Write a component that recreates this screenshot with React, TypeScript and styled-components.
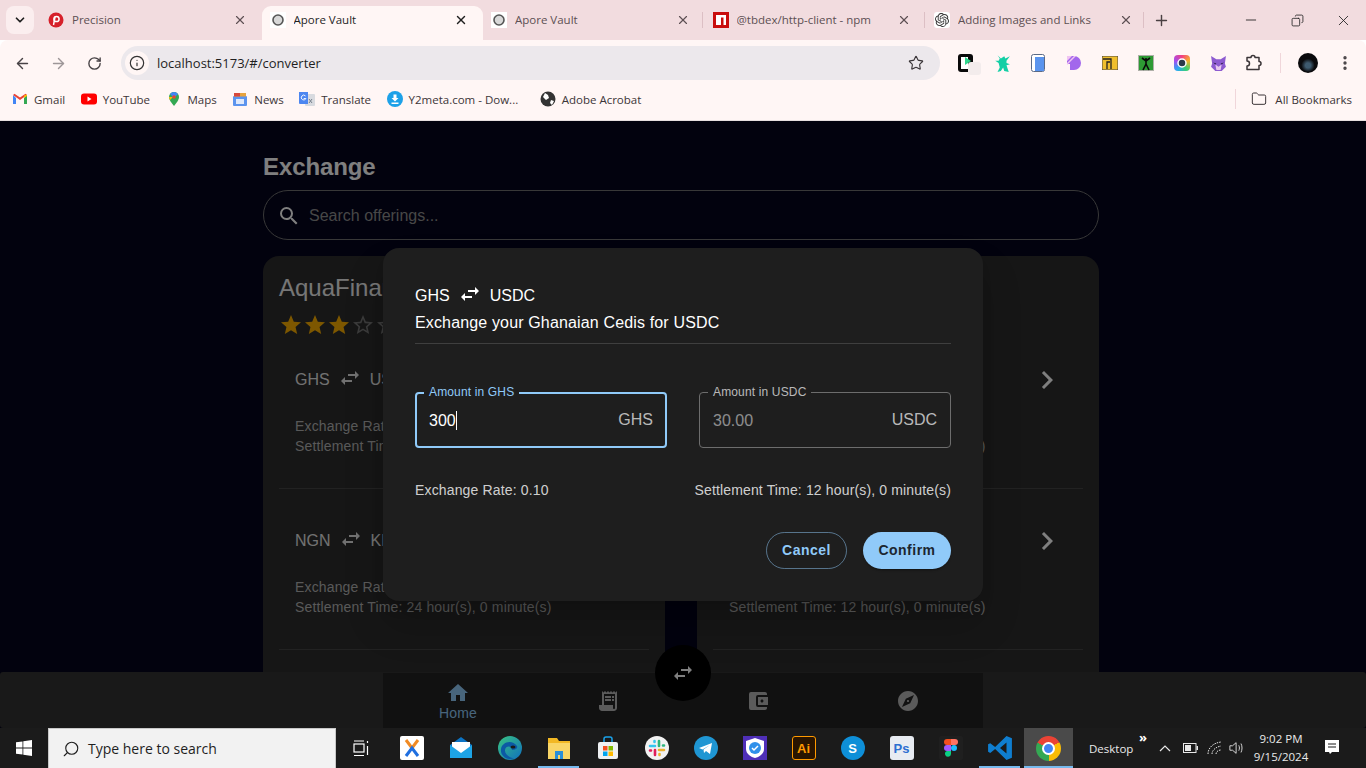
import React from "react";
import styled, { createGlobalStyle } from "styled-components";
import { ArrowLeft, ArrowRight, RotateCw, Star, Info, Minus, X, Plus, Folder, EllipsisVertical, ChevronDown, Search, Copy } from "lucide-react";
import { MdHome, MdReceiptLong, MdAccountBalanceWallet, MdExplore, MdSwapHoriz, MdStar, MdStarBorder, MdSearch, MdChevronRight } from "react-icons/md";
import { SiOpenai } from "react-icons/si";

const Global = createGlobalStyle`
  html, body { margin: 0; padding: 0; height: 100%; overflow: hidden; }
  #root { height: 100%; }
  * { box-sizing: border-box; }
`;

const Screen = styled.div`
  width: 1366px; height: 768px; display: flex; flex-direction: column; overflow: hidden;
  font-family: "Open Sans", "Liberation Sans", sans-serif;
`;

/* ---------- browser chrome ---------- */
const TabStrip = styled.div`
  height: 40px; background: #f2dcdf; display: flex; align-items: flex-start; padding: 6px 0 0 6px;
`;
const TabMenu = styled.div`
  width: 28px; height: 28px; border-radius: 8px; background: #fbeeef; color: #1f1f1f;
  display: flex; align-items: center; justify-content: center; margin-right: 6px;
`;
const Tab = styled.div<{ $active?: boolean; $sep?: boolean }>`
  width: 221.5px; height: 34px; display: flex; align-items: center; padding: 0 15px 6px 8px; gap: 8px; position: relative;
  border-radius: 9px 9px 0 0; font-size: 11.5px; line-height: 16px;
  background: ${(p) => (p.$active ? "#fff6f5" : "transparent")};
  color: ${(p) => (p.$active ? "#1f1f1f" : "#5d5053")};
  &::before {
    content: ""; display: ${(p) => (p.$sep ? "block" : "none")}; position: absolute; left: -2.5px; top: 6px; width: 1px; height: 16px; background: #dcbfc4;
  }
`;
const TabTitle = styled.span`
  flex: 1; white-space: nowrap; overflow: hidden;
`;
const NewTab = styled.div`
  margin-left: -3.5px; width: 34px; height: 28px; display: flex; align-items: center; justify-content: center; color: #4a4042;
  &::before { content: ""; width: 1px; height: 16px; background: #dcbfc4; margin-left: -9px; margin-right: 9px; }
`;
const WindowControls = styled.div`
  margin-left: auto; display: flex; color: #1f1f1f; height: 28px; align-items: center;
`;
const WindowButton = styled.div`
  width: 46px; display: flex; justify-content: center;
`;
const Toolbar = styled.div`
  height: 46px; background: #fff6f5; display: flex; align-items: center; padding-left: 4px; border-radius: 8px 8px 0 0;
`;
const NavButton = styled.div<{ $dim?: boolean }>`
  width: 36px; display: flex; justify-content: center; color: ${(p) => (p.$dim ? "#9d9698" : "#474245")};
`;
const Omnibox = styled.div`
  width: 819px; height: 34px; margin-left: 9px; border-radius: 17px; background: #ece8ec;
  display: flex; align-items: center; padding: 0 16px 0 4px; font-size: 13px; color: #1f1f1f;
`;
const InfoBadge = styled.div`
  width: 24px; height: 24px; border-radius: 50%; background: #fff6f5; display: flex; align-items: center; justify-content: center; margin-right: 8px;
`;
const Url = styled.span` flex: 1; `;
const ExtRow = styled.div` display: flex; margin-left: 8px; `;
const ExtSlot = styled.div`
  width: 36px; height: 20px; display: flex; align-items: center; justify-content: center; color: #3b3538; position: relative;
`;
const ExtSep = styled.div` width: 1px; height: 20px; background: #f0d6da; margin-left: 8px; `;
const Avatar = styled.div`
  width: 20px; height: 20px; border-radius: 50%; margin-left: 17px;
  background: radial-gradient(circle at 50% 62%, #3e5a6e 0 16%, #0a0a0c 42%);
`;
const Dots = styled.div` margin-left: 18px; color: #474245; display: flex; `;
const BookmarkBar = styled.div`
  height: 35px; background: #fff6f5; display: flex; align-items: center; padding: 0 14px 8px 12px; gap: 15.5px;
  font-size: 11.5px; color: #3c3538; border-bottom: 1px solid #e6dfdf;
`;
const Bookmark = styled.div<{ $gap?: number; $shift?: number }>`
  display: flex; align-items: center; gap: ${(p) => p.$gap ?? 6}px; white-space: nowrap; margin-left: ${(p) => p.$shift ?? 0}px;
`;
const BookmarkSep = styled.div` width: 1px; height: 20px; background: #f0d6da; margin-left: auto; `;

/* ---------- app ---------- */
const Viewport = styled.div`
  flex: 1; position: relative; overflow: hidden; background: #04041c;
  font-family: "Liberation Sans", Arial, sans-serif; color: #fff; letter-spacing: 0.15px;
`;
const Content = styled.div` width: 836px; margin-left: 263px; padding-top: 30px; `;
const Heading = styled.h1`
  margin: 0 0 7px; font-size: 24px; line-height: 32px; font-weight: 700; color: #fff; letter-spacing: -0.1px;
`;
const SearchBar = styled.div`
  height: 50px; border: 1px solid #707070; border-radius: 25px; display: flex; align-items: center; padding: 1px 13px 0;
  gap: 8px; font-size: 16px; color: #8f8f8f; margin-bottom: 16px; letter-spacing: 0;
  svg { color: #fff; }
`;
const Cards = styled.div` display: grid; grid-template-columns: 402px 402px; gap: 32px; `;
const Card = styled.section`
  background: #2c2c2c; border-radius: 16px 16px 0 0; padding: 16px 16px 0; height: 480px;
`;
const Provider = styled.div` font-size: 24px; line-height: 32px; color: #ededed; letter-spacing: 0; `;
const Stars = styled.div` display: flex; height: 24px; margin-top: 9px; color: #faaf00; `;
const Row = styled.div`
  display: flex; justify-content: space-between; align-items: flex-start; padding: 40px 0 32px 16px;
  border-bottom: 1px solid #444;
  ${Stars} + & { padding-top: 31px; }
`;
const Pair = styled.div`
  display: flex; align-items: center; gap: 8px; font-size: 16px; line-height: 22px; height: 22px; letter-spacing: 0;
  svg { margin-top: -5px; }
`;
const RowPair = styled(Pair)` color: #e3e3e3; margin-top: 1px; `;
const RowInfo = styled.div`
  margin-top: 25px; font-size: 14px; line-height: 20px; color: #b3b3b3;
`;
const Chevron = styled.div` margin: -6px 18px 0 0; height: 36px; color: #fff; `;

const BottomStrip = styled.div`
  position: absolute; left: 0; right: 0; bottom: 0; height: 56px; background: #323232; border-radius: 3px; display: flex; justify-content: center;
`;
const BottomNav = styled.nav`
  width: 600px; margin-top: 1px; display: grid; grid-template-columns: repeat(4, 1fr); background: #222;
`;
const NavItem = styled.div<{ $active?: boolean }>`
  display: flex; flex-direction: column; align-items: center; justify-content: center; font-size: 14px; line-height: 16px; padding-top: 1px;
  color: ${(p) => (p.$active ? "#90caf9" : "#b6b6b6")};
`;
const SwapFab = styled.div`
  position: absolute; left: 655px; top: 524px; width: 56px; height: 56px; border-radius: 50%; background: #000;
  display: flex; align-items: center; justify-content: center; color: #fff;
`;

const Backdrop = styled.div`
  position: absolute; inset: 0; background: rgba(0, 0, 0, 0.5); display: flex; align-items: center; justify-content: center;
`;
const Dialog = styled.div`
  width: 600px; background: #1e1e1e; border-radius: 16px; padding: 37px 32px 32px; color: #fff;
  box-shadow: 0 11px 15px -7px rgba(0,0,0,.2), 0 24px 38px 3px rgba(0,0,0,.14);
`;
const Sub = styled.div`
  margin-top: 4px; font-size: 16px; line-height: 24px; padding-bottom: 8px; border-bottom: 1px solid #3f3f3f;
`;
const Fields = styled.div` display: grid; grid-template-columns: 252px 252px; gap: 32px; margin-top: 48px; `;
const Field = styled.div<{ $focused?: boolean }>`
  position: relative; height: 56px; border-radius: 4px; display: flex; align-items: center; justify-content: space-between;
  border: ${(p) => (p.$focused ? "2px solid #90caf9" : "1px solid #6d6d6d")};
  font-size: 16px; padding: 0 ${(p) => (p.$focused ? 12 : 13)}px;
  letter-spacing: 0;
`;
const FieldLabel = styled.label<{ $focused?: boolean }>`
  position: absolute; left: ${(p) => (p.$focused ? 7 : 8)}px; top: ${(p) => (p.$focused ? -9 : -8)}px; padding: 0 5px; background: #1e1e1e; font-size: 12px; line-height: 14px; letter-spacing: 0.15px;
  color: ${(p) => (p.$focused ? "#90caf9" : "rgba(255,255,255,.7)")};
`;
const Value = styled.span<{ $muted?: boolean }>`
  color: ${(p) => (p.$muted ? "rgba(255,255,255,.5)" : "#fff")}; display: inline-flex; align-items: center; margin-top: 1px;
`;
const Caret = styled.i` width: 1px; height: 19px; background: #fff; display: block; `;
const Suffix = styled.span` color: rgba(255,255,255,.7); `;
const InfoRow = styled.div`
  display: flex; justify-content: space-between; margin-top: 32px; font-size: 14px; line-height: 20px; color: rgba(255,255,255,.8);
`;
const Actions = styled.div` display: flex; justify-content: flex-end; gap: 16px; margin-top: 32px; `;
const PillButton = styled.button<{ $primary?: boolean }>`
  height: 37px; border-radius: 19px; padding: 0 0 2px; font: 700 14px/1 "Liberation Sans", Arial, sans-serif; letter-spacing: 0.5px;
  width: ${(p) => (p.$primary ? 88 : 81)}px;
  color: ${(p) => (p.$primary ? "#1c2630" : "#90caf9")};
  background: ${(p) => (p.$primary ? "#90caf9" : "transparent")};
  border: ${(p) => (p.$primary ? "none" : "1px solid rgba(144,202,249,.5)")};
  box-shadow: ${(p) => (p.$primary ? "0 3px 1px -2px rgba(0,0,0,.2), 0 2px 2px rgba(0,0,0,.14)" : "none")};
`;

/* ---------- taskbar ---------- */
const Taskbar = styled.div`
  height: 40px; background: #1b1b1b; display: flex; align-items: stretch; color: #fff; position: relative;
`;
const StartButton = styled.div` width: 48px; display: flex; align-items: center; justify-content: center; `;
const SearchBox = styled.div`
  width: 288px; background: #f2f2f2; color: #1f1f1f; display: flex; align-items: center; gap: 8px; padding-left: 13px;
  font-size: 14px; border: 1px solid #c8c8c8; border-bottom: none;
`;
const TaskView = styled.div` width: 51px; display: flex; align-items: center; justify-content: center; `;
const TaskSlot = styled.div<{ $active?: boolean; $open?: boolean }>`
  width: 49px; display: flex; align-items: center; justify-content: center; position: relative;
  background: ${(p) => (p.$active ? "#4a4a4a" : "transparent")};
  &::after {
    content: ""; position: absolute; bottom: 0; height: 2px; background: #76b9ed;
    left: ${(p) => (p.$active ? 0 : 4)}px; right: ${(p) => (p.$active ? 0 : 4)}px;
    display: ${(p) => (p.$active || p.$open ? "block" : "none")};
  }
`;
const AppTile = styled.span<{ $bg: string; $fg: string; $bd?: string; $round?: boolean }>`
  width: 24px; height: 24px; display: flex; align-items: center; justify-content: center;
  border-radius: ${(p) => (p.$round ? "50%" : "3px")}; background: ${(p) => p.$bg}; color: ${(p) => p.$fg};
  border: ${(p) => (p.$bd ? `1px solid ${p.$bd}` : "none")};
  font: 700 13px/1 "Liberation Sans", Arial, sans-serif;
`;
const ChromeLogo = styled.span`
  width: 25px; height: 25px; border-radius: 50%; display: flex; align-items: center; justify-content: center;
  background: conic-gradient(from -62deg, #ea4335 0 122deg, #fbbc05 122deg 240deg, #34a853 240deg 360deg);
  &::after { content: ""; width: 9px; height: 9px; border-radius: 50%; background: #4285f4; border: 2px solid #fff; box-sizing: content-box; }
`;
const Tray = styled.div` flex: 1; display: flex; align-items: center; font-size: 11.5px; color: #eaeaea; padding-left: 16px; `;
const DesktopLabel = styled.span` width: 50px; `;
const Chevrons = styled.span` font-size: 13px; font-weight: 700; margin-top: -22px; width: 12px; color: #fff; line-height: 14px; `;
const TrayIcon = styled.span<{ $w: number }>` width: ${(p) => p.$w}px; display: flex; justify-content: center; `;
const Clock = styled.div` width: 72px; text-align: center; font-size: 11.5px; line-height: 18px; white-space: nowrap; margin-top: -1px; `;
const Notify = styled.span` margin-left: 6px; display: flex; `;

/* ---------- drawings ---------- */
const Fav = ({ children, s = 16 }: { children: React.ReactNode; s?: number }) => (
  <svg width={s} height={s} viewBox="0 0 16 16" style={{ flex: "none" }}>{children}</svg>
);
const Precision = () => <Fav><circle cx="8" cy="8" r="7.5" fill="#d6202a" /><circle cx="8.5" cy="7" r="2.6" fill="none" stroke="#fff" strokeWidth="1.5" /><path d="M7 5l-1.5 8" stroke="#fff" strokeWidth="1.4" /></Fav>;
const Vault = () => <Fav><rect width="16" height="16" fill="#fff" /><circle cx="8" cy="8" r="5" fill="#d8d8d8" stroke="#555" strokeWidth="1.6" /></Fav>;
const Npm = () => <Fav><rect width="16" height="16" fill="#c90d0d" /><path d="M3 3h10v10h-2.5V5.5H8V13H3z" fill="#fff" /></Fav>;
const OpenAi = () => <span style={{ width: 16, height: 16, background: "#fff", borderRadius: 3, display: "flex", alignItems: "center", justifyContent: "center", color: "#333" }}><SiOpenai size={14} /></span>;
const Gmail = () => <Fav><path d="M1 4v9h3V7z" fill="#4285f4" /><path d="M15 4v9h-3V7z" fill="#34a853" /><path d="M1 4l7 5 7-5-1.5-1.3L8 6.5 2.5 2.7z" fill="#ea4335" /><path d="M12 4.5V7l3-2V3.5z" fill="#fbbc05" /></Fav>;
const YouTube = () => <Fav><rect y="2.5" width="16" height="11" rx="3" fill="#f00" /><path d="M6.5 5.5l4 2.5-4 2.5z" fill="#fff" /></Fav>;
const Maps = () => <Fav><path d="M8 1a5 5 0 0 0-5 5c0 3.5 5 9 5 9s5-5.500 5-9a5 5 0 0 0-5-5z" fill="#34a853" /><path d="M4 3l4 4 4-4a5 5 0 0 0-8 0z" fill="#4285f4" /><path d="M3 6c0 1 .5 2 1 3l3-3z" fill="#fbbc05" /><circle cx="8" cy="6" r="1.8" fill="#ea4335" /></Fav>;
const News = () => <Fav><rect x="1" y="5" width="14" height="10" rx="1" fill="#5c94ee" /><path d="M2 2h12v3.500H2z" fill="#e8a33d" /><path d="M2 2h6v3.500H2z" fill="#d8483b" /><rect x="4" y="8" width="8" height="5" fill="#dfe9fb" /></Fav>;
const Translate = () => <Fav><rect x="6" y="3" width="10" height="12" rx="1" fill="#d8dadf" /><path d="M0 1h9v12H1a1 1 0 0 1-1-1z" fill="#4c86f0" /><path d="M6.500 5a2.400 2.400 0 1 0 .4 2.500H4.700" fill="none" stroke="#fff" strokeWidth=".9" /><path d="M10 8l3 4M13 8l-3 4" stroke="#77808c" /></Fav>;
const Y2 = () => <Fav><circle cx="8" cy="8" r="8" fill="#1da1e8" /><path d="M6.500 3.500h3V7h2L8 10.500 4.500 7h2zM4.500 11.500h7V13h-7z" fill="#fff" /></Fav>;
const Globe = () => <Fav><circle cx="8" cy="8" r="7.500" fill="#333" /><path d="M5 2l3 2 1 3-3 2-3-3zM11 9l3 1-2 4-2-2z" fill="#fff" /></Fav>;
const Ext1 = () => <svg width="18" height="20" viewBox="0 0 18 20"><rect x="1" y="1" width="15" height="18" rx="3" fill="#0a0a0a" /><rect x="4" y="4" width="7" height="12" fill="#fff" /><path d="M8 4l6 4-6 4z" fill="#2fd58c" /></svg>;
const ExtPatch = styled.i` position: absolute; left: 20px; top: 9px; width: 13px; height: 13px; border-radius: 3px; background: #f3ecec; `;
const Ext2 = () => <Fav s={18}><path d="M4 1l3 3 3-2 1 2 4-2-3 4 0 2 3 1-3 1 1 3 1 3-4-1-1-3-2 3-3 1 2-4-1-4-3-2 3 0 1-2z" fill="#13cfa5" /></Fav>;
const Ext3 = () => <svg width="14" height="18" viewBox="0 0 14 18"><rect x=".5" y=".5" width="13" height="17" rx="2" fill="#fff" stroke="#5b6a86" /><rect x="4" y="3" width="9" height="14" fill="#5a94ee" /></svg>;
const Ext4 = () => <Fav s={16}><path d="M1 1h7a7 7 0 0 1 0 14H4v-6H1z" fill="#a267ec" /><path d="M1 1h5L1 6zM1 8l7-7h2L1 10z" fill="#f1c4f2" /></Fav>;
const Ext5 = () => <svg width="16" height="14" viewBox="0 0 16 14"><rect width="16" height="14" fill="#f0bf2c" stroke="#444" /><path d="M1 3h8v10M5 13V6h3" fill="none" stroke="#222" strokeWidth="1.300" /></svg>;
const Ext6 = () => <Fav><rect width="16" height="16" fill="#aeb0a8" /><rect x="1" y="1" width="14" height="14" fill="#2e9a34" /><path d="M8 3v6l-3 6M8 9l3 6M4 3l4 3 4-3" stroke="#0a0a0a" strokeWidth="1.600" fill="none" /></Fav>;
const Ext7 = () => <span style={{ width: 16, height: 16, borderRadius: 4, background: "conic-gradient(#f43f7f,#f7b32b,#3ad06f,#2aa9f2,#a24df0,#f43f7f)", display: "flex", alignItems: "center", justifyContent: "center" }}><svg width="10" height="10"><circle cx="5" cy="5" r="4" fill="#2c3a4a" stroke="#fff" strokeWidth="1.500" /></svg></span>;
const Fox = () => <Fav s={17}><path d="M1 1l5 3h4l5-3-1 7 1 3-4 4H5l-4-4 1-3z" fill="#8d5bd0" /><path d="M5 9l3 2 3-2-1 5H6z" fill="#e8c8ee" /><path d="M3 7l3 1-1 1zM13 7l-3 1 1 1z" fill="#2c1c46" /></Fav>;
const PuzzleIcon = () => <svg width="18" height="18" viewBox="0 0 18 18" fill="none" stroke="#3b3538" strokeWidth="1.500" strokeLinejoin="round"><path d="M2 3.500h4a2 2 0 0 1 4 0h4v4a2 2 0 0 1 0 4v4H2v-3.500a1.800 1.800 0 0 0 0-5z" /></svg>;

const WinLogo = () => <svg width="16" height="16" viewBox="0 0 16 16" fill="#fff"><path d="M0 2.300l6.500-.9v6.200H0zM7.300 1.300L16 0v7.600H7.300zM0 8.400h6.500v6.200L0 13.700zM7.300 8.400H16V16l-8.700-1.200z" /></svg>;
const TaskViewIcon = () => <svg width="17" height="17" viewBox="0 0 17 17" fill="none" stroke="#fff" strokeWidth="1.200"><rect x="1" y="4" width="10" height="8" /><path d="M1 1h10M1 15.500h10M14.500 1v2M14.500 6v9" /></svg>;
const S = ({ children, s = 24 }: { children: React.ReactNode; s?: number }) => <svg width={s} height={s} viewBox="0 0 24 24">{children}</svg>;
const ClickApp = () => <S><rect width="24" height="24" rx="2" fill="#fff" /><path d="M6 4l6 8 6-8" fill="none" stroke="#f08a24" strokeWidth="3" /><path d="M6 20l6-8 6 8" fill="none" stroke="#1f6fe0" strokeWidth="3" /></S>;
const MailApp = () => <S><path d="M12 1l11 8v13H1V9z" fill="#0c74c4" /><path d="M3 6h18v8l-9 5-9-5z" fill="#fff" /><path d="M1 9l11 8 11-8v13H1z" fill="#1da4e6" /></S>;
const EdgeApp = () => <S><defs><linearGradient id="edg" x1="0" y1="0" x2="1" y2="1"><stop offset="0" stopColor="#39c481" /><stop offset="1" stopColor="#0f6fc0" /></linearGradient></defs><circle cx="12" cy="12" r="12" fill="url(#edg)" /><path d="M3 13C4 6 14 3 19 10c1 2-1 4-5 4 0-4-6-5-7 0-.5 4 4 8 9 8-7 3-14-2-13-9z" fill="#0c59a4" /><ellipse cx="15" cy="11" rx="2.500" ry="1.500" fill="#1b1b1b" /></S>;
const FolderApp = () => <S><path d="M1 2h9l2 3h11v18H1z" fill="#f2b824" /><rect x="1" y="7" width="22" height="16" fill="#f9d667" /><path d="M8 15h8v8h-3v-4h-2v4H8z" fill="#2a8fd8" /></S>;
const StoreApp = () => <S><path d="M8 6V3a2 2 0 0 1 2-2h4a2 2 0 0 1 2 2v3" fill="none" stroke="#1aa2ea" strokeWidth="1.500" /><rect x="2" y="6" width="20" height="17" rx="2" fill="#eef0f2" /><rect x="7" y="10" width="4.500" height="4.500" fill="#f25022" /><rect x="12.500" y="10" width="4.500" height="4.500" fill="#7fba00" /><rect x="7" y="15.500" width="4.500" height="4.500" fill="#00a4ef" /><rect x="12.500" y="15.500" width="4.500" height="4.500" fill="#ffb900" /></S>;
const SlackApp = () => <S><circle cx="12" cy="12" r="12" fill="#f2f2f2" /><g strokeWidth="2.600" strokeLinecap="round"><path d="M5 10h5M9.500 5v1" stroke="#36c5f0" /><path d="M14 5v5M19 9.500h-1" stroke="#2eb67d" /><path d="M19 14h-5M14.500 19v-1" stroke="#ecb22e" /><path d="M10 19v-5M5 14.500h1" stroke="#e01e5a" /></g></S>;
const TelegramApp = () => <S><circle cx="12" cy="12" r="12" fill="#1f96d3" /><path d="M5 12l13-5-2 11-4-3-2 2-.5-3.500L16 9l-7.500 4.500z" fill="#fff" /></S>;
const ShieldApp = () => <S><rect width="24" height="24" fill="#4f2fb8" /><path d="M12 2l9 3v8c0 5-5 8-9 9-4-1-9-4-9-9V5z" fill="#fff" /><circle cx="12" cy="12" r="6" fill="#2f90ea" /><path d="M9 12l2 2 4-4" stroke="#fff" strokeWidth="1.500" fill="none" /></S>;
const FigmaApp = () => <S><rect width="24" height="24" rx="2" fill="#1f1f1f" /><path d="M8 3h4v6H8a3 3 0 0 1 0-6z" fill="#f24e1e" /><path d="M12 3h4a3 3 0 0 1 0 6h-4z" fill="#ff7262" /><path d="M8 9h4v6H8a3 3 0 0 1 0-6z" fill="#a259ff" /><circle cx="15" cy="12" r="3" fill="#1abcfe" /><path d="M8 15h4v3a3 3 0 1 1-4-3z" fill="#0acf83" /></S>;
const CodeApp = () => <S s={26}><path d="M18 1L7.500 11 3 7.500 1 8.500v7l2 1L7.500 13 18 23l5-2V3zM18 7v10l-6-5z" fill="#0f7ed0" fillRule="evenodd" /></S>;

const Wifi = () => <svg width="16" height="14" viewBox="0 0 16 14" fill="none" stroke="#e8e8e8"><path d="M1 13C1 7 6 2 14 1M5 13c0-4 4-7 9-8M9 13c0-2 2-4 5-4" strokeDasharray="1.500 1" /></svg>;
const Volume = () => <svg width="18" height="16" viewBox="0 0 18 16" fill="none" stroke="#e8e8e8"><path d="M1 5.500h3L8 2v12l-4-3.500H1zM11 5c1 2 1 4 0 6M13.500 3c1.500 3 1.500 7 0 10" /></svg>;
const Battery = () => <svg width="15" height="10" viewBox="0 0 15 10"><rect x=".5" y=".5" width="12.500" height="9" fill="none" stroke="#e8e8e8" /><rect x="2" y="2" width="6" height="6" fill="#e8e8e8" /><rect x="13.500" y="3" width="1.500" height="4" fill="#e8e8e8" /></svg>;
const Caret2 = () => <svg width="12" height="8" viewBox="0 0 12 8" fill="none" stroke="#e8e8e8" strokeWidth="1.200"><path d="M1 7l5-5 5 5" /></svg>;
const NotifyIcon = () => <svg width="18" height="18" viewBox="0 0 18 18"><path d="M2 1h14v12H9l-2 2-1-2H2z" fill="#fff" /><path d="M5 5h8M5 8h8" stroke="#1b1b1b" /></svg>;

const tabs = [
  { icon: <Precision />, title: "Precision" },
  { icon: <Vault />, title: "Apore Vault", active: true },
  { icon: <Vault />, title: "Apore Vault" },
  { icon: <Npm />, title: "@tbdex/http-client - npm", sep: true },
  { icon: <OpenAi />, title: "Adding Images and Links", sep: true },
];
const marks = [
  { icon: <Gmail />, label: "Gmail" },
  { icon: <YouTube />, label: "YouTube" },
  { icon: <Maps />, label: "Maps" },
  { icon: <News />, label: "News" },
  { icon: <Translate />, label: "Translate" },
  { icon: <Y2 />, label: "Y2meta.com - Dow..." },
  { icon: <Globe />, label: "Adobe Acrobat", shift: 6 },
];
const exts = [<Ext1 />, <Ext2 />, <Ext3 />, <Ext4 />, <Ext5 />, <Ext6 />, <Ext7 />, <Fox />, <PuzzleIcon />];

const offers = [
  [
    { from: "GHS", to: "USDC", rate: "0.10", time: "12 hour(s), 0 minute(s)" },
    { from: "NGN", to: "KES", rate: "0.10", time: "24 hour(s), 0 minute(s)" },
  ],
  [
    { from: "USD", to: "KES", rate: "0.10", time: "12 hour(s), 0 minute(s)" },
    { from: "USD", to: "EUR", rate: "0.10", time: "12 hour(s), 0 minute(s)" },
  ],
];

const Swap = () => <MdSwapHoriz size={24} />;

export default function App() {
  return (
    <Screen>
      <Global />
      <TabStrip>
        <TabMenu><ChevronDown size={14} strokeWidth={3} /></TabMenu>
        {tabs.map((t, i) => (
          <Tab key={i} $active={t.active} $sep={t.sep}>
            {t.icon}
            <TabTitle>{t.title}</TabTitle>
            <X size={14} strokeWidth={t.active ? 2.4 : 2} />
          </Tab>
        ))}
        <NewTab><Plus size={17} strokeWidth={2} /></NewTab>
        <WindowControls>
          <WindowButton><Minus size={16} strokeWidth={1.3} /></WindowButton>
          <WindowButton><Copy size={13} strokeWidth={1.5} style={{ transform: "scaleX(-1)" }} /></WindowButton>
          <WindowButton><X size={17} strokeWidth={1.2} /></WindowButton>
        </WindowControls>
      </TabStrip>
      <Toolbar>
        <NavButton><ArrowLeft size={17} strokeWidth={2} /></NavButton>
        <NavButton $dim><ArrowRight size={17} strokeWidth={2} /></NavButton>
        <NavButton><RotateCw size={15} strokeWidth={2.2} /></NavButton>
        <Omnibox>
          <InfoBadge><Info size={16} strokeWidth={1.8} color="#333" /></InfoBadge>
          <Url>localhost:5173/#/converter</Url>
          <Star size={16} strokeWidth={1.7} color="#3a3538" />
        </Omnibox>
        <ExtRow>
          {exts.map((e, i) => (
            <ExtSlot key={i}>{e}{i === 0 && <ExtPatch />}</ExtSlot>
          ))}
        </ExtRow>
        <ExtSep />
        <Avatar />
        <Dots><EllipsisVertical size={18} strokeWidth={2.5} /></Dots>
      </Toolbar>
      <BookmarkBar>
        {marks.map((m) => (
          <Bookmark key={m.label} $shift={m.shift}>{m.icon}{m.label}</Bookmark>
        ))}
        <BookmarkSep />
        <Bookmark $gap={8}><Folder size={16} strokeWidth={1.5} />All Bookmarks</Bookmark>
      </BookmarkBar>

      <Viewport>
        <Content>
          <Heading>Exchange</Heading>
          <SearchBar><MdSearch size={24} />Search offerings...</SearchBar>
          <Cards>
            {offers.map((list, c) => (
              <Card key={c}>
                <Provider>AquaFinance</Provider>
                <Stars>
                  <MdStar size={24} /><MdStar size={24} /><MdStar size={24} /><MdStarBorder size={24} color="#777" /><MdStarBorder size={24} color="#777" />
                </Stars>
                {list.map((o) => (
                  <Row key={o.from + o.to}>
                    <div>
                      <RowPair>{o.from}<Swap />{o.to}</RowPair>
                      <RowInfo>Exchange Rate: {o.rate}<br />Settlement Time: {o.time}</RowInfo>
                    </div>
                    <Chevron><MdChevronRight size={36} /></Chevron>
                  </Row>
                ))}
              </Card>
            ))}
          </Cards>
        </Content>
        <BottomStrip>
          <BottomNav>
            <NavItem $active><MdHome size={24} />Home</NavItem>
            <NavItem><MdReceiptLong size={24} /></NavItem>
            <NavItem><MdAccountBalanceWallet size={24} /></NavItem>
            <NavItem><MdExplore size={24} /></NavItem>
          </BottomNav>
        </BottomStrip>
        <SwapFab><Swap /></SwapFab>
        <Backdrop>
          <Dialog>
            <Pair>GHS<Swap />USDC</Pair>
            <Sub>Exchange your Ghanaian Cedis for USDC</Sub>
            <Fields>
              <Field $focused>
                <FieldLabel $focused>Amount in GHS</FieldLabel>
                <Value>300<Caret /></Value>
                <Suffix>GHS</Suffix>
              </Field>
              <Field>
                <FieldLabel>Amount in USDC</FieldLabel>
                <Value $muted>30.00</Value>
                <Suffix>USDC</Suffix>
              </Field>
            </Fields>
            <InfoRow>
              <span>Exchange Rate: 0.10</span>
              <span>Settlement Time: 12 hour(s), 0 minute(s)</span>
            </InfoRow>
            <Actions>
              <PillButton>Cancel</PillButton>
              <PillButton $primary>Confirm</PillButton>
            </Actions>
          </Dialog>
        </Backdrop>
      </Viewport>

      <Taskbar>
        <StartButton><WinLogo /></StartButton>
        <SearchBox><Search size={18} strokeWidth={1.5} style={{ transform: "scaleX(-1)" }} />Type here to search</SearchBox>
        <TaskView><TaskViewIcon /></TaskView>
        <TaskSlot><ClickApp /></TaskSlot>
        <TaskSlot><MailApp /></TaskSlot>
        <TaskSlot><EdgeApp /></TaskSlot>
        <TaskSlot $open><FolderApp /></TaskSlot>
        <TaskSlot><StoreApp /></TaskSlot>
        <TaskSlot><SlackApp /></TaskSlot>
        <TaskSlot><TelegramApp /></TaskSlot>
        <TaskSlot><ShieldApp /></TaskSlot>
        <TaskSlot><AppTile $bg="#2a1500" $fg="#ff9a00" $bd="#ff9a00">Ai</AppTile></TaskSlot>
        <TaskSlot><AppTile $bg="#0e8fd8" $fg="#fff" $round>S</AppTile></TaskSlot>
        <TaskSlot><AppTile $bg="#e8ecf2" $fg="#2c6fd1">Ps</AppTile></TaskSlot>
        <TaskSlot><FigmaApp /></TaskSlot>
        <TaskSlot $open><CodeApp /></TaskSlot>
        <TaskSlot $active><ChromeLogo /></TaskSlot>
        <Tray>
          <DesktopLabel>Desktop</DesktopLabel>
          <Chevrons>»</Chevrons>
          <TrayIcon $w={28}><Caret2 /></TrayIcon>
          <TrayIcon $w={22}><Battery /></TrayIcon>
          <TrayIcon $w={28}><Wifi /></TrayIcon>
          <TrayIcon $w={16}><Volume /></TrayIcon>
          <Clock>9:02 PM<br />9/15/2024</Clock>
          <Notify><NotifyIcon /></Notify>
        </Tray>
      </Taskbar>
    </Screen>
  );
}
